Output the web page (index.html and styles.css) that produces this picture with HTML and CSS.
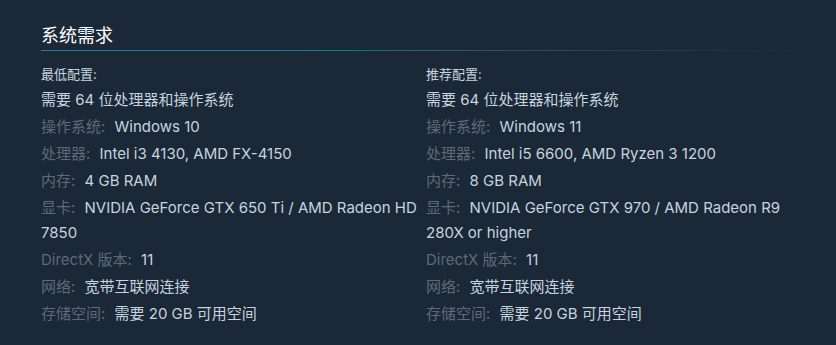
FILE: index.html
```html
<!DOCTYPE html>
<html lang="zh-CN">
<head>
<meta charset="utf-8">
<link rel="stylesheet" href="styles.css">
</head>
<body>
<div class="sysreq">
  <h2 class="title">系统需求</h2>
  <div class="cols">
    <div class="col">
      <div class="tier">最低配置:</div>
      <ul class="list">
        <li class="plain">需要 64 位处理器和操作系统</li>
        <li><span class="label">操作系统:</span> Windows 10</li>
        <li><span class="label">处理器:</span> Intel i3 4130, AMD FX-4150</li>
        <li><span class="label">内存:</span> 4 GB RAM</li>
        <li><span class="label">显卡:</span> NVIDIA GeForce GTX 650 Ti / AMD Radeon HD 7850</li>
        <li><span class="label">DirectX 版本:</span> 11</li>
        <li><span class="label">网络:</span> 宽带互联网连接</li>
        <li><span class="label">存储空间:</span> 需要 20 GB 可用空间</li>
      </ul>
    </div>
    <div class="col">
      <div class="tier">推荐配置:</div>
      <ul class="list">
        <li class="plain">需要 64 位处理器和操作系统</li>
        <li><span class="label">操作系统:</span> Windows 11</li>
        <li><span class="label">处理器:</span> Intel i5 6600, AMD Ryzen 3 1200</li>
        <li><span class="label">内存:</span> 8 GB RAM</li>
        <li><span class="label">显卡:</span> NVIDIA GeForce GTX 970 / AMD Radeon R9 280X or higher</li>
        <li><span class="label">DirectX 版本:</span> 11</li>
        <li><span class="label">网络:</span> 宽带互联网连接</li>
        <li><span class="label">存储空间:</span> 需要 20 GB 可用空间</li>
      </ul>
    </div>
  </div>
</div>
</body>
</html>
```
FILE: styles.css
```css
html, body {
  margin: 0;
  padding: 0;
  background: #1b2838;
}
body {
  font-family: Inter, "Noto Sans CJK SC", sans-serif;
  color: #c6d4df;
  width: 836px;
  height: 345px;
  overflow: hidden;
}
.sysreq {
  padding: 22px 25px 0 41px;
}
.title {
  margin: 0;
  width: 770px;
  font-size: 18px;
  font-weight: normal;
  line-height: 24px;
  padding-bottom: 5px;
  color: #ffffff;
  font-family: "Noto Sans CJK SC", sans-serif;
  background: linear-gradient(to right, #3b6f8f 0%, #3b6f8f 30%, rgba(59,111,143,0) 100%) left bottom / 100% 1px no-repeat;
}
.cols {
  display: grid;
  grid-template-columns: 385px 385px;
  margin-top: 13px;
}
.col {
  padding-right: 0;
}
.tier {
  font-size: 13px;
  line-height: 20px;
  color: #c6d4df;
  margin-bottom: 3px;
}
.list {
  list-style: none;
  margin: 0;
  padding: 0;
}
.list li {
  font-size: 15px;
  line-height: 25px;
  margin-bottom: 2px;
  color: #c6d4df;
}
.label {
  color: #5e6a76;
  margin-right: 5px;
}
```
